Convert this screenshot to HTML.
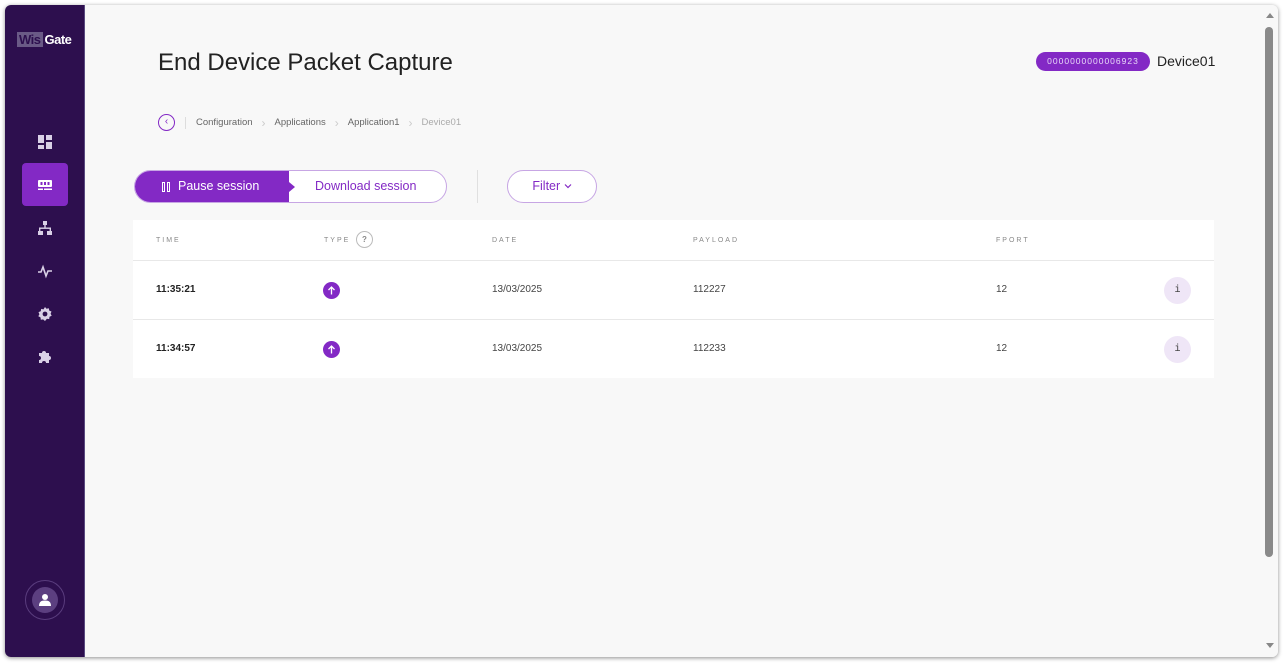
<!DOCTYPE html>
<html><head><meta charset="utf-8"><style>
*{box-sizing:border-box;margin:0;padding:0}
body{width:1285px;height:665px;background:#fff;font-family:"Liberation Sans",sans-serif;position:relative;overflow:hidden}
.win{position:absolute;left:5px;top:5px;width:1273px;height:652px;background:#f8f8f8;border-radius:6px;overflow:hidden;box-shadow:0 1px 4px rgba(0,0,0,.45)}
.side{position:absolute;left:0;top:0;width:80px;height:652px;background:#2d0f4e;border-right:1px solid #5a4a80}
.logo{position:absolute;left:12px;top:27px;font-size:13px;font-weight:bold;color:#fff;letter-spacing:-.5px}
.logo span{background:#6a5a86;color:#2d0f4e;padding:0 2px;margin-right:2px}
.ic{position:absolute;left:32px;width:16px;height:16px}
.act{position:absolute;left:17px;top:158px;width:46px;height:43px;background:#8329c5;border-radius:4px}
.scroll{position:absolute;left:1257px;top:0;width:16px;height:652px;background:#f8f8f8}
.thumb{position:absolute;left:3px;top:22px;width:8px;height:530px;background:#8a8a8a;border-radius:4px}
.main{position:absolute;left:80px;top:0}
h1{position:absolute;left:73px;top:44px;font-size:24px;font-weight:normal;color:#222;white-space:nowrap}
.badge{position:absolute;left:951px;top:47px;width:114px;height:19px;border-radius:10px;background:#8329c5;color:#e8d8f8;font-size:8.5px;letter-spacing:1px;text-align:center;line-height:19px}
.dev{position:absolute;left:1072px;top:48px;font-size:14px;color:#222}
.bc{position:absolute;left:73px;top:109px;font-size:9.5px;color:#666;white-space:nowrap;display:flex;align-items:center}
.back{width:17px;height:17px;border:1.5px solid #8329c5;border-radius:50%;color:#8329c5;font-size:10px;line-height:13px;text-align:center;margin-right:10px}
.sep{width:1px;height:12px;background:#ddd;margin-right:10px}
.ch{color:#ccc;margin:0 9px;font-size:12px}
.btns{position:absolute;left:49px;top:165px;width:313px;height:33px;border:1px solid #c7a6e4;border-radius:17px;overflow:hidden;background:#fff}
.pause{position:absolute;left:0;top:0;width:154px;height:33px;background:#8329c5;color:#fff;font-size:12.5px;line-height:31px;padding-left:26px}
.pause:after{content:"";position:absolute;right:-6px;top:11px;border-left:6px solid #8329c5;border-top:5px solid transparent;border-bottom:5px solid transparent}
.dl{position:absolute;left:180px;top:0;line-height:31px;color:#8329c5;font-size:12.5px}
.vsep{position:absolute;left:392px;top:165px;width:1px;height:33px;background:#e0e0e0}
.filter{position:absolute;left:422px;top:165px;width:90px;height:33px;border:1px solid #c7a6e4;border-radius:17px;color:#8329c5;font-size:12.5px;text-align:center;line-height:31px;background:#fff}
.tbl{position:absolute;left:48px;top:215px;width:1081px;height:158px;background:#fff}
.th{position:absolute;top:17px;font-size:7px;letter-spacing:2px;color:#888}
.row{position:absolute;left:0;width:1081px;height:59px;border-top:1px solid #e8e8e8}
.row div{position:absolute;top:23px;font-size:10px;color:#444}
.up{width:17px;height:17px}
.info{width:27px;height:27px;border-radius:50%;background:#efe6f7;color:#888;font-family:"Liberation Mono",monospace;font-size:13px;text-align:center;line-height:27px}
</style></head><body>
<div class="win">
<div class="side">
<div class="logo"><span>Wis</span>Gate</div>
<svg class="ic" style="top:129px" viewBox="0 0 16 16" fill="#d9d0e6"><rect x="1" y="1" width="6" height="8"/><rect x="9" y="1" width="6" height="5"/><rect x="1" y="11" width="6" height="4"/><rect x="9" y="8" width="6" height="7"/></svg>
<div class="act"></div>
<svg class="ic" style="top:172px" viewBox="0 0 16 16" fill="#fff"><rect x="1" y="3" width="14" height="7" rx="1"/><rect x="3.5" y="5" width="2" height="3" fill="#8329c5"/><rect x="7" y="5" width="2" height="3" fill="#8329c5"/><rect x="10.5" y="5" width="2" height="3" fill="#8329c5"/><rect x="1" y="11.5" width="5" height="1.5"/><rect x="7" y="11.5" width="8" height="1.5"/></svg>
<svg class="ic" style="top:215px" viewBox="0 0 16 16" fill="#d9d0e6"><rect x="6" y="1" width="4" height="4"/><rect x="7.3" y="5" width="1.4" height="3"/><rect x="2" y="7.5" width="12" height="1.4"/><rect x="2" y="7.5" width="1.4" height="4"/><rect x="12.6" y="7.5" width="1.4" height="4"/><rect x="1" y="11" width="5" height="4"/><rect x="10" y="11" width="5" height="4"/></svg>
<svg class="ic" style="top:258px" viewBox="0 0 16 16" fill="none" stroke="#d9d0e6" stroke-width="1.6"><path d="M1 9h3l2-5 3 9 2-5h4"/></svg>
<svg class="ic" style="top:301px" viewBox="0 0 16 16" fill="#d9d0e6"><path d="M8 1l1.5 1.8 2.3-.5.5 2.3 2.2.9-.9 2.2 1.1 2-2.2 1.1-.3 2.3-2.3-.3L8 15l-1.9-1.6-2.3.3-.3-2.3-2.2-1.1 1.1-2-.9-2.2 2.2-.9.5-2.3 2.3.5z"/><circle cx="8" cy="8" r="2.4" fill="#2d0f4e"/></svg>
<svg class="ic" style="top:344px" viewBox="0 0 16 16" fill="#d9d0e6"><path d="M2 4h3a2 2 0 1 1 4 0h3v3a2 2 0 1 1 0 4v3H9a2 2 0 1 0-4 0H2v-3a2 2 0 1 0 0-4z"/></svg>
<div style="position:absolute;left:20px;top:575px;width:40px;height:40px;border-radius:50%;border:1px solid #5a3d7e"></div>
<div style="position:absolute;left:27px;top:582px;width:26px;height:26px;border-radius:50%;background:#5c3f80"></div>
<svg style="position:absolute;left:33px;top:588px" width="14" height="14" viewBox="0 0 14 14" fill="#fff"><circle cx="7" cy="4" r="3"/><path d="M1 13c0-4 2-5.5 6-5.5s6 1.5 6 5.5z"/></svg>
</div>
<div class="main">
<h1>End Device Packet Capture</h1>
<div class="badge">0000000000006923</div>
<div class="dev">Device01</div>
<div class="bc"><div class="back">‹</div><div class="sep"></div>Configuration<span class="ch">›</span>Applications<span class="ch">›</span>Application1<span class="ch">›</span><span style="color:#aaa">Device01</span></div>
<div class="btns"><div class="pause"><span style="position:absolute;left:27px;top:11px;width:3px;height:10px;border:1px solid #fff"></span><span style="position:absolute;left:32px;top:11px;width:3px;height:10px;border:1px solid #fff"></span><span style="padding-left:17px">Pause session</span></div><div class="dl">Download session</div></div>
<div class="vsep"></div>
<div class="filter">Filter <svg width="8" height="6" viewBox="0 0 8 6" style="vertical-align:1px"><path d="M1 1.5l3 3 3-3" fill="none" stroke="#8329c5" stroke-width="1.2"/></svg></div>
<div class="tbl">
<div class="th" style="left:23px">TIME</div>
<div class="th" style="left:191px">TYPE</div>
<div style="position:absolute;left:223px;top:11px;width:17px;height:17px;border:1px solid #bbb;border-radius:50%;font-size:8px;color:#888;text-align:center;line-height:15px;font-weight:bold">?</div>
<div class="th" style="left:359px">DATE</div>
<div class="th" style="left:560px">PAYLOAD</div>
<div class="th" style="left:863px">FPORT</div>
<div class="row" style="top:40px"><div style="left:23px;font-weight:bold;color:#222">11:35:21</div><svg class="up" style="position:absolute;left:190px;top:21px" viewBox="0 0 17 17"><circle cx="8.5" cy="8.5" r="8.5" fill="#8329c5"/><path d="M8.5 12.5V5M5.5 8l3-3 3 3" fill="none" stroke="#fff" stroke-width="1.3"/></svg><div style="left:359px">13/03/2025</div><div style="left:560px">112227</div><div style="left:863px">12</div><div class="info" style="left:1031px;top:16px">i</div></div>
<div class="row" style="top:99px"><div style="left:23px;font-weight:bold;color:#222">11:34:57</div><svg class="up" style="position:absolute;left:190px;top:21px" viewBox="0 0 17 17"><circle cx="8.5" cy="8.5" r="8.5" fill="#8329c5"/><path d="M8.5 12.5V5M5.5 8l3-3 3 3" fill="none" stroke="#fff" stroke-width="1.3"/></svg><div style="left:359px">13/03/2025</div><div style="left:560px">112233</div><div style="left:863px">12</div><div class="info" style="left:1031px;top:16px">i</div></div>
</div>
</div>
<div class="scroll"><div style="position:absolute;left:4px;top:8px;border-bottom:5px solid #888;border-left:4px solid transparent;border-right:4px solid transparent"></div><div class="thumb"></div><div style="position:absolute;left:4px;top:638px;border-top:5px solid #888;border-left:4px solid transparent;border-right:4px solid transparent"></div></div>
</div>
</body></html>
